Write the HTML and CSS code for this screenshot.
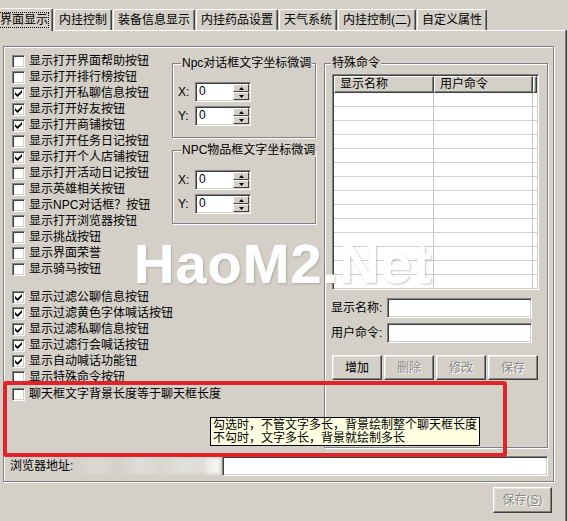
FILE: index.html
```html
<!DOCTYPE html>
<html lang="zh-CN">
<head>
<meta charset="utf-8">
<title>界面显示</title>
<link rel="stylesheet" href="styles.css">
</head>
<body>
<div class="win">
  <div class="tabs">
    <div class="tab sel"><span class="focus">界面显示</span></div>
    <div class="tab">内挂控制</div>
    <div class="tab">装备信息显示</div>
    <div class="tab">内挂药品设置</div>
    <div class="tab">天气系统</div>
    <div class="tab">内挂控制(二)</div>
    <div class="tab">自定义属性</div>
  </div>
  <div class="page">
    <div class="panel">
      <div class="main">
        <div class="leftblock">
          <div class="cols">
            <div class="checks">
              <div class="row"><span class="cb"></span>显示打开界面帮助按钮</div>
              <div class="row"><span class="cb"></span>显示打开排行榜按钮</div>
              <div class="row"><span class="cb"><svg width="7" height="7" viewBox="0 0 7 7"><polygon points="0,2 2.5,4.5 7,0 7,2.5 2.5,7 0,4.5"/></svg></span>显示打开私聊信息按钮</div>
              <div class="row"><span class="cb"><svg width="7" height="7" viewBox="0 0 7 7"><polygon points="0,2 2.5,4.5 7,0 7,2.5 2.5,7 0,4.5"/></svg></span>显示打开好友按钮</div>
              <div class="row"><span class="cb"><svg width="7" height="7" viewBox="0 0 7 7"><polygon points="0,2 2.5,4.5 7,0 7,2.5 2.5,7 0,4.5"/></svg></span>显示打开商铺按钮</div>
              <div class="row"><span class="cb"></span>显示打开任务日记按钮</div>
              <div class="row"><span class="cb"><svg width="7" height="7" viewBox="0 0 7 7"><polygon points="0,2 2.5,4.5 7,0 7,2.5 2.5,7 0,4.5"/></svg></span>显示打开个人店铺按钮</div>
              <div class="row"><span class="cb"></span>显示打开活动日记按钮</div>
              <div class="row"><span class="cb"></span>显示英雄相关按钮</div>
              <div class="row"><span class="cb"></span>显示NPC对话框？按钮</div>
              <div class="row"><span class="cb"></span>显示打开浏览器按钮</div>
              <div class="row"><span class="cb"></span>显示挑战按钮</div>
              <div class="row"><span class="cb"></span>显示界面荣誉</div>
              <div class="row"><span class="cb"></span>显示骑马按钮</div>
              <div class="row sep"><span class="cb"><svg width="7" height="7" viewBox="0 0 7 7"><polygon points="0,2 2.5,4.5 7,0 7,2.5 2.5,7 0,4.5"/></svg></span>显示过滤公聊信息按钮</div>
              <div class="row"><span class="cb"><svg width="7" height="7" viewBox="0 0 7 7"><polygon points="0,2 2.5,4.5 7,0 7,2.5 2.5,7 0,4.5"/></svg></span>显示过滤黄色字体喊话按钮</div>
              <div class="row"><span class="cb"><svg width="7" height="7" viewBox="0 0 7 7"><polygon points="0,2 2.5,4.5 7,0 7,2.5 2.5,7 0,4.5"/></svg></span>显示过滤私聊信息按钮</div>
              <div class="row"><span class="cb"><svg width="7" height="7" viewBox="0 0 7 7"><polygon points="0,2 2.5,4.5 7,0 7,2.5 2.5,7 0,4.5"/></svg></span>显示过滤行会喊话按钮</div>
              <div class="row"><span class="cb"><svg width="7" height="7" viewBox="0 0 7 7"><polygon points="0,2 2.5,4.5 7,0 7,2.5 2.5,7 0,4.5"/></svg></span>显示自动喊话功能钮</div>
              <div class="row"><span class="cb"></span>显示特殊命令按钮</div>
            </div>
            <div class="mid">
              <div class="grp g1">
                <div class="gtitle">Npc对话框文字坐标微调</div>
                <div class="srow"><span class="slbl">X:</span><div class="spin"><span class="val">0</span><div class="arrows"><span class="ab"><svg width="5" height="3" viewBox="0 0 5 3"><polygon points="2.5,0 5,3 0,3"/></svg></span><span class="ab"><svg width="5" height="3" viewBox="0 0 5 3"><polygon points="0,0 5,0 2.5,3"/></svg></span></div></div></div>
                <div class="srow"><span class="slbl">Y:</span><div class="spin"><span class="val">0</span><div class="arrows"><span class="ab"><svg width="5" height="3" viewBox="0 0 5 3"><polygon points="2.5,0 5,3 0,3"/></svg></span><span class="ab"><svg width="5" height="3" viewBox="0 0 5 3"><polygon points="0,0 5,0 2.5,3"/></svg></span></div></div></div>
              </div>
              <div class="grp g2">
                <div class="gtitle">NPC物品框文字坐标微调</div>
                <div class="srow"><span class="slbl">X:</span><div class="spin"><span class="val">0</span><div class="arrows"><span class="ab"><svg width="5" height="3" viewBox="0 0 5 3"><polygon points="2.5,0 5,3 0,3"/></svg></span><span class="ab"><svg width="5" height="3" viewBox="0 0 5 3"><polygon points="0,0 5,0 2.5,3"/></svg></span></div></div></div>
                <div class="srow"><span class="slbl">Y:</span><div class="spin"><span class="val">0</span><div class="arrows"><span class="ab"><svg width="5" height="3" viewBox="0 0 5 3"><polygon points="2.5,0 5,3 0,3"/></svg></span><span class="ab"><svg width="5" height="3" viewBox="0 0 5 3"><polygon points="0,0 5,0 2.5,3"/></svg></span></div></div></div>
              </div>
            </div>
          </div>
          <div class="row chat"><span class="cb"></span>聊天框文字背景长度等于聊天框长度</div>
        </div>
        <div class="grp special">
          <div class="gtitle">特殊命令</div>
          <div class="list">
            <div class="lhead"><span class="hc c1">显示名称</span><span class="hc c2">用户命令</span><span class="hc c3"></span></div>
            <div class="lbody"></div>
          </div>
          <div class="frow first"><span class="flbl">显示名称:</span><span class="inp"></span></div>
          <div class="frow"><span class="flbl">用户命令:</span><span class="inp"></span></div>
          <div class="btns">
            <button class="btn">增加</button>
            <button class="btn dis">删除</button>
            <button class="btn dis">修改</button>
            <button class="btn dis">保存</button>
          </div>
        </div>
      </div>
      <div class="browser">
        <span class="blbl">浏览器地址:</span>
        <span class="blur"></span>
        <span class="inp url"></span>
      </div>
    </div>
    <div class="foot"><button class="btn dis save">保存(<u>S</u>)</button></div>
  </div>
  <div class="watermark">HaoM2.Net</div>
  <div class="redbox"></div>
  <div class="tip">勾选时，不管文字多长，背景绘制整个聊天框长度<br>不勾时，文字多长，背景就绘制多长</div>
</div>
</body>
</html>
```
FILE: styles.css
```css
html, body {
  margin: 0;
  padding: 0;
}
body {
  background: #d4d0c8;
  color: #000;
  font-family: "Liberation Sans", "Noto Sans CJK SC", sans-serif;
  font-size: 12px;
  line-height: 16px;
}
.win {
  position: relative;
  width: 568px;
  height: 521px;
  overflow: hidden;
}

/* tabs */
.tabs {
  display: flex;
  align-items: flex-end;
  height: 30px;
  margin-left: -5px;
}
.tab {
  height: 21px;
  box-sizing: border-box;
  padding: 2px 4px 0 4px;
  margin-right: 1px;
  border-top: 1px solid #fff;
  border-left: 1px solid #fff;
  border-right: 1px solid #404040;
  box-shadow: inset -1px 0 #808080;
  border-radius: 2px 2px 0 0;
  white-space: nowrap;
  background: #d4d0c8;
}
.tab.sel {
  position: relative;
  z-index: 1;
  height: 23px;
  margin-bottom: -1px;
  padding-top: 3px;
}
.focus {
  outline: 1px dotted #000;
  outline-offset: 0;
}

/* page */
.page {
  width: 566px;
  height: 491px;
  box-sizing: border-box;
  border-top: 1px solid #fff;
  border-right: 1px solid #808080;
  box-shadow: 1px 0 #404040;
  padding: 15px 11px 0 3px;
}
.panel {
  height: 436px;
  box-sizing: border-box;
  border: 1px solid #808080;
  box-shadow: inset 1px 1px #fff, 1px 1px #fff;
  display: flex;
  flex-direction: column;
  padding-bottom: 5px;
}
.main {
  display: flex;
}
.leftblock {
  width: 320px;
}
.cols {
  display: flex;
}
.checks {
  width: 168px;
  box-sizing: border-box;
  padding: 6px 0 0 8px;
}
.row {
  display: flex;
  align-items: center;
  height: 16px;
  white-space: nowrap;
}
.row.sep {
  margin-top: 12px;
}
.row.chat {
  padding-left: 8px;
  margin-top: 1px;
}
.cb {
  flex: none;
  width: 13px;
  height: 13px;
  box-sizing: border-box;
  margin-right: 4px;
  border: 1px solid;
  border-color: #808080 #fff #fff #808080;
  box-shadow: inset 1px 1px #404040, inset -1px -1px #d4d0c8;
  background: #fff;
  display: flex;
  align-items: center;
  justify-content: center;
}
.cb svg {
  display: block;
  fill: #000;
}

/* group boxes */
.grp {
  border: 1px solid #808080;
  box-shadow: inset 1px 1px #fff, 1px 1px #fff;
  box-sizing: border-box;
  display: flex;
  flex-direction: column;
}
.gtitle {
  align-self: flex-start;
  margin: -8px 0 0 3px;
  padding: 0 1px;
  line-height: 14px;
  background: #d4d0c8;
  white-space: nowrap;
}
.mid {
  width: 152px;
  padding-top: 16px;
}
.mid .grp {
  width: 144px;
}
.g1 {
  padding: 0 4px 11px 5px;
}
.g1 .gtitle + .srow {
  margin-top: 12px;
}
.g2 {
  margin-top: 12px;
  padding: 0 4px 9px 5px;
}
.g2 .gtitle + .srow {
  margin-top: 13px;
}
.srow {
  display: flex;
  align-items: center;
  height: 20px;
}
.srow + .srow {
  margin-top: 4px;
}
.slbl {
  width: 17px;
}
.spin {
  display: flex;
  width: 56px;
  height: 20px;
  box-sizing: border-box;
  border: 1px solid;
  border-color: #808080 #fff #fff #808080;
  box-shadow: inset 1px 1px #404040, inset -1px -1px #d4d0c8;
  background: #fff;
}
.spin .val {
  flex: 1;
  padding-left: 3px;
  line-height: 17px;
}
.arrows {
  width: 16px;
  display: flex;
  flex-direction: column;
  margin: 1px 1px 1px 0;
}
.ab {
  flex: 1;
  box-sizing: border-box;
  background: #d4d0c8;
  border: 1px solid;
  border-color: #fff #404040 #404040 #fff;
  display: flex;
  align-items: center;
  justify-content: center;
}
.ab svg {
  display: block;
  fill: #000;
}

/* special commands */
.special {
  width: 224px;
  margin-top: 16px;
  height: 385px;
  padding: 0 0 0 7px;
}
.special .gtitle {
  margin-left: -1px;
}
.list {
  margin-top: 4px;
  width: 207px;
  height: 216px;
  box-sizing: border-box;
  border: 1px solid;
  border-color: #808080 #fff #fff #808080;
  box-shadow: inset 1px 1px #404040, inset -1px -1px #d4d0c8;
  padding: 1px;
  display: flex;
  flex-direction: column;
  background: #fff;
}
.lhead {
  display: flex;
  height: 17px;
  flex: none;
}
.hc {
  box-sizing: border-box;
  background: #d4d0c8;
  border: 1px solid;
  border-color: #fff #404040 #404040 #fff;
  box-shadow: inset -1px -1px #808080;
  padding-left: 5px;
  line-height: 14px;
}
.c1 { width: 100px; }
.c2 { width: 99px; }
.c3 { flex: 1; padding: 0; }
.lbody {
  flex: 1;
  background:
    linear-gradient(to right, transparent 99px, #c4c4c4 99px, #c4c4c4 100px, transparent 100px, transparent 198px, #c4c4c4 198px, #c4c4c4 199px, transparent 199px),
    repeating-linear-gradient(to bottom, transparent 0, transparent 13px, #cfcfcf 13px, #cfcfcf 14px),
    #fff;
}
.frow {
  display: flex;
  align-items: center;
  height: 20px;
  margin-top: 5px;
}
.frow.first {
  margin-top: 8px;
}
.flbl {
  width: 56px;
  margin-left: -1px;
  white-space: nowrap;
}
.inp {
  display: block;
  width: 145px;
  height: 20px;
  box-sizing: border-box;
  border: 1px solid;
  border-color: #808080 #fff #fff #808080;
  box-shadow: inset 1px 1px #404040, inset -1px -1px #d4d0c8;
  background: #fff;
}
.btns {
  display: flex;
  gap: 2px;
  margin-top: 12px;
}
.btn {
  font: inherit;
  line-height: 16px;
  color: #000;
  width: 50px;
  height: 25px;
  padding: 0;
  margin: 0;
  background: #d4d0c8;
  border: 1px solid;
  border-color: #fff #404040 #404040 #fff;
  box-shadow: inset -1px -1px #808080, inset 1px 1px #e6e4e0;
  border-radius: 0;
}
.btn.dis {
  color: #8a8a8a;
  text-shadow: 1px 1px #fff;
}

/* browser */
.browser {
  margin-top: auto;
  display: flex;
  align-items: center;
  height: 20px;
  padding-left: 6px;
}
.blbl {
  width: 65px;
  white-space: nowrap;
}
.blur {
  width: 145px;
  height: 16px;
  margin-right: 2px;
  background: linear-gradient(to right, #d4d0c8 0, #dcd9d4 15%, #d3d0ca 30%, #e0ded9 45%, #d8d5cf 60%, #e3e1dd 75%, #dedbd6 88%, #f2f1ef 94%, #f6f6f5 100%);
  filter: blur(1.5px);
}
.inp.url {
  width: 326px;
}

.foot {
  display: flex;
  justify-content: flex-end;
  padding: 5px 2px 0 0;
}
.btn.save {
  width: 59px;
  height: 26px;
}

/* overlays */
.watermark {
  position: absolute;
  left: 134px;
  top: 236px;
  font-family: "Liberation Sans", sans-serif;
  font-weight: bold;
  font-size: 56px;
  line-height: 56px;
  letter-spacing: 1px;
  color: rgba(255, 255, 255, 0.93);
  text-shadow: 0 0 1px #fff, 1px 1px 2px rgba(110, 110, 110, 0.45);
  white-space: nowrap;
}
.redbox {
  position: absolute;
  left: 3px;
  top: 381px;
  width: 504px;
  height: 76px;
  box-sizing: border-box;
  border: 4px solid #e1232b;
  border-radius: 3px;
}
.tip {
  position: absolute;
  left: 210px;
  top: 417px;
  width: 270px;
  height: 29px;
  box-sizing: border-box;
  padding: 1px 2px 0 2px;
  border: 1px solid #000;
  background: #ffffe1;
  line-height: 13px;
  white-space: nowrap;
}
```
